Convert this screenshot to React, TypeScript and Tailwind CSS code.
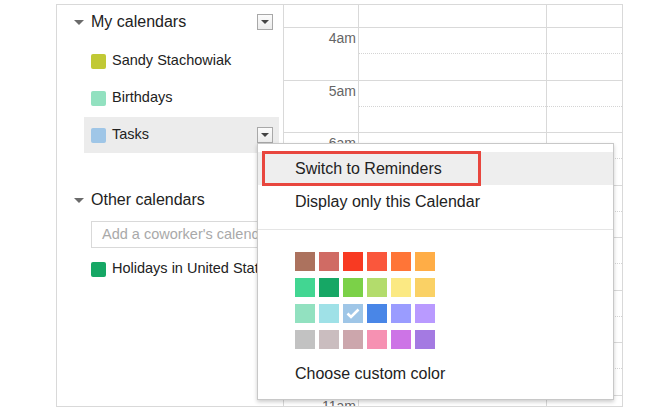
const palette = [
  ['#ac725e', '#d06b64', '#f83a22', '#fa573c', '#ff7537', '#ffad46'],
  ['#42d692', '#16a765', '#7bd148', '#b3dc6c', '#fbe983', '#fad165'],
  ['#92e1c0', '#9fe1e7', '#9fc6e7', '#4986e7', '#9a9cff', '#b99aff'],
  ['#c2c2c2', '#cabdbf', '#cca6ac', '#f691b2', '#cd74e6', '#a47ae2'],
];

const hours = [
  { label: '4am', h: 53 },
  { label: '5am', h: 52 },
  { label: '6am', h: 53 },
  { label: '7am', h: 52 },
  { label: '8am', h: 53 },
  { label: '9am', h: 52 },
  { label: '10am', h: 53 },
  { label: '11am', h: 52 },
];

function Caret() {
  return (
    <svg width="10" height="5" viewBox="0 0 10 5" className="shrink-0">
      <path d="M0 0 L10 0 L5 5 Z" fill="#6b6b6b" />
    </svg>
  );
}

function DropButton() {
  return (
    <div className="w-4 h-4 border border-[#a8a8a8] bg-gradient-to-b from-[#fbfbfb] to-[#ececec] flex items-center justify-center shrink-0">
      <svg width="8" height="4" viewBox="0 0 8 4">
        <path d="M0 0 L8 0 L4 4 Z" fill="#444" />
      </svg>
    </div>
  );
}

function CalendarItem({ color, name, active }: { color: string; name: string; active?: boolean }) {
  return (
    <div
      className={`h-9 ml-[27px] mr-[4px] pl-[7px] pr-[6px] flex items-center gap-[6px] ${
        active ? 'bg-[#ececec]' : ''
      }`}
    >
      <div className="w-[15px] h-[15px] rounded-[2px] shrink-0" style={{ backgroundColor: color }} />
      <span className="flex-1 whitespace-nowrap text-[14.5px] text-[#222]">{name}</span>
      {active && <DropButton />}
    </div>
  );
}

function Sidebar() {
  return (
    <div className="w-[226px] shrink-0 pt-0 overflow-hidden">
      <div className="h-[34px] pl-[17px] pr-[10px] flex items-center">
        <Caret />
        <span className="ml-[7px] flex-1 text-[16px] text-[#222]">My calendars</span>
        <DropButton />
      </div>

      <div className="mt-[4px] flex flex-col gap-px">
        <CalendarItem color="#c1c935" name="Sandy Stachowiak" />
        <CalendarItem color="#92e1c0" name="Birthdays" />
        <CalendarItem color="#9fc6e7" name="Tasks" active />
      </div>

      <div className="mt-[30px] h-[34px] pl-[17px] flex items-center">
        <Caret />
        <span className="ml-[7px] text-[16px] text-[#222]">Other calendars</span>
      </div>

      <div className="mt-[4px] ml-[34px] mr-[4px] h-[27px] border border-[#d9d9d9] pl-[10px] flex items-center">
        <span className="whitespace-nowrap text-[14.5px] text-[#a9a9a9]">Add a coworker's calendar</span>
      </div>

      <div className="mt-[3px]">
        <CalendarItem color="#16a765" name="Holidays in United States" />
      </div>
    </div>
  );
}

function TimeGrid() {
  return (
    <div className="flex-1 border-l border-[#d9d9d9]">
      <div className="h-[23px] flex border-b border-[#d9d9d9]">
        <div className="w-[75px] border-r border-[#d9d9d9]" />
        <div className="w-[188px] border-r border-[#d9d9d9]" />
        <div className="flex-1" />
      </div>
      {hours.map((row) => (
        <div key={row.label} className="flex border-b border-[#d9d9d9]" style={{ height: row.h }}>
          <div className="w-[75px] border-r border-[#d9d9d9] pt-[2px] pr-[2px] text-right text-[14px] leading-4 text-[#666]">
            {row.label}
          </div>
          <div className="w-[188px] border-r border-[#d9d9d9]">
            <div className="h-[26px] border-b border-dotted border-[#d4d4d4]" />
          </div>
          <div className="flex-1">
            <div className="h-[26px] border-b border-dotted border-[#d4d4d4]" />
          </div>
        </div>
      ))}
    </div>
  );
}

function ColorMenu() {
  return (
    <div className="absolute left-[257px] top-[143px] w-[357px] h-[257px] bg-white border border-[#c8c8c8] shadow-[0_2px_4px_rgba(0,0,0,0.2)] pt-[8px] text-[16px] text-[#222]">
      <div className="relative h-[33px] bg-[#eeeeee] pl-[37px] flex items-center">
        Switch to Reminders
        <div className="absolute left-[4px] -top-px w-[219px] h-[35px] border-[3px] border-[#e8463e]" />
      </div>
      <div className="h-[34px] pl-[37px] flex items-center">Display only this Calendar</div>
      <div className="mt-[10px] h-px bg-[#e5e5e5]" />

      <div className="mt-[22px] pl-[37px] grid grid-cols-[repeat(6,20px)] gap-x-[4px] gap-y-[7px] w-max">
        {palette.flat().map((c) => (
          <div key={c} className="h-[19px] flex items-center justify-center" style={{ backgroundColor: c }}>
            {c === '#9fc6e7' && (
              <svg width="14" height="11" viewBox="0 0 14 11">
                <path d="M1.5 5.5 L5 9 L12.5 1.5" fill="none" stroke="#fff" strokeWidth="2.6" />
              </svg>
            )}
          </div>
        ))}
      </div>

      <div className="mt-[15px] h-[20px] pl-[37px] flex items-center">Choose custom color</div>
    </div>
  );
}

export default function App() {
  return (
    <div className="relative w-[670px] h-[410px] bg-white pt-[4px] pl-[56px] font-['Liberation_Sans',Arial,sans-serif]">
      <div className="w-[567px] h-[403px] border border-[#d9d9d9] overflow-hidden flex">
        <Sidebar />
        <TimeGrid />
      </div>
      <ColorMenu />
    </div>
  );
}
